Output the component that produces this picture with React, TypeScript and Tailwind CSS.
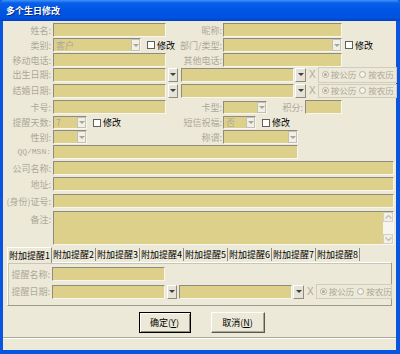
import React from "react";

const sunken =
  "border border-t-[#8f8c7f] border-l-[#8f8c7f] border-b-[#f7f6f0] border-r-[#f7f6f0]";

const Label = ({ className = "", children }: { className?: string; children: React.ReactNode }) => (
  <span className={`shrink-0 text-right whitespace-nowrap text-[#aca899] ${className}`}>{children}</span>
);

const Field = ({ className = "" }: { className?: string }) => (
  <div className={`shrink-0 bg-[#ddd08a] ${sunken} ${className}`} />
);

const Arrow = ({ dark = false }: { dark?: boolean }) => (
  <span
    className={`block w-0 h-0 border-x-[3px] border-t-[3px] border-x-transparent ${
      dark ? "border-t-[#3f3f3f]" : "border-t-[#a9a699]"
    }`}
  />
);

const Select = ({ className = "", text }: { className?: string; text?: string }) => (
  <div className={`shrink-0 flex items-stretch justify-between bg-[#ddd08a] ${sunken} ${className}`}>
    <span className="pl-[2px] flex items-center text-[#aca899]">{text}</span>
    <span className="flex items-center justify-center w-[9px] bg-[#f1efe6] border border-[#c4c1b3]">
      <Arrow />
    </span>
  </div>
);

const DateBtn = ({ className = "" }: { className?: string }) => (
  <div
    className={`shrink-0 h-[14px] flex items-center justify-center bg-[#e6e3d6] border border-t-white border-l-white border-b-[#8f8c7f] border-r-[#8f8c7f] ${className}`}
  >
    <Arrow dark />
  </div>
);

const Check = ({ className = "" }: { className?: string }) => (
  <div className={`shrink-0 flex items-center ${className}`}>
    <span className="w-[8px] h-[8px] bg-white border border-[#5f5f5f]" />
    <span className="ml-[2px] text-black">修改</span>
  </div>
);

const Radio = ({ checked = false }: { checked?: boolean }) => (
  <span className="shrink-0 w-[7px] h-[7px] rounded-full bg-[#f4f3ee] border border-[#b4b1a3] flex items-center justify-center">
    {checked && <span className="w-[3px] h-[3px] rounded-full bg-[#aca899]" />}
  </span>
);

const RadioGroup = ({ className = "" }: { className?: string }) => (
  <div
    className={`shrink-0 flex items-center whitespace-nowrap pl-[3px] text-[8.5px] border border-[#d0cdbd] text-[#aca899] ${className}`}
  >
    <Radio checked />
    <span className="ml-[2px]">按公历</span>
    <span className="ml-[3px] flex">
      <Radio />
    </span>
    <span className="ml-[2px]">按农历</span>
  </div>
);

const X = ({ className = "" }: { className?: string }) => (
  <span className={`shrink-0 text-[#aca899] font-['Liberation_Sans',sans-serif] text-[10px] ${className}`}>X</span>
);

const Chevron = ({ up }: { up?: boolean }) => (
  <svg width="7" height="4" viewBox="0 0 7 4">
    <polyline
      points={up ? "0.5,3.5 3.5,0.5 6.5,3.5" : "0.5,0.5 3.5,3.5 6.5,0.5"}
      fill="none"
      stroke="#c2bfb2"
      strokeWidth="1.2"
    />
  </svg>
);

const tabs = ["附加提醒1", "附加提醒2", "附加提醒3", "附加提醒4", "附加提醒5", "附加提醒6", "附加提醒7", "附加提醒8"];

export default function App() {
  return (
    <div className="w-[400px] h-[354px] flex flex-col bg-[#0a55e0] text-[9px] leading-none font-['Noto_Sans_CJK_SC',sans-serif] overflow-hidden">
      {/* title bar */}
      <div className="h-[21px] shrink-0 flex items-center pl-[6px] rounded-t-[4px] bg-[linear-gradient(to_bottom,#3e93fb_0%,#0a5fe8_14%,#0055e5_50%,#0051df_86%,#0040c2_100%)]">
        <span className="text-white font-bold text-[9px] [text-shadow:1px_1px_0_#0a2a80]">多个生日修改</span>
      </div>

      <div className="flex-1 flex flex-col bg-[#ece9d8] ml-[3px] mr-[4px] mb-[4px]">
        {/* 姓名 */}
        <div className="flex items-center h-[14px] mt-[2px]">
          <div className="w-[169px] flex items-center">
            <Label className="w-[48px]">姓名:</Label>
            <Field className="ml-[2px] w-[113px] h-[14px]" />
          </div>
          <Label className="w-[50px]">昵称:</Label>
          <Field className="ml-[1px] w-[119px] h-[14px]" />
        </div>

        {/* 类别 */}
        <div className="flex items-center h-[14px] mt-[1px]">
          <div className="w-[169px] flex items-center">
            <Label className="w-[48px]">类别:</Label>
            <Select className="ml-[2px] w-[88px] h-[14px]" text="客户" />
            <Check className="ml-[6px]" />
          </div>
          <Label className="w-[50px]">部门/类型:</Label>
          <Select className="ml-[1px] w-[119px] h-[14px]" />
          <Check className="ml-[3px]" />
        </div>

        {/* 移动电话 */}
        <div className="flex items-center h-[14px] mt-[1px]">
          <div className="w-[169px] flex items-center">
            <Label className="w-[48px]">移动电话:</Label>
            <Field className="ml-[2px] w-[113px] h-[14px]" />
          </div>
          <Label className="w-[50px]">其他电话:</Label>
          <Field className="ml-[1px] w-[119px] h-[14px]" />
        </div>

        {/* 出生日期 */}
        <div className="flex items-center h-[15px] mt-[0px]">
          <Label className="w-[48px]">出生日期:</Label>
          <Field className="ml-[2px] w-[113px] h-[14px]" />
          <DateBtn className="ml-[2px] w-[10px]" />
          <Field className="ml-[3px] w-[113px] h-[14px]" />
          <DateBtn className="ml-[1px] w-[11px]" />
          <X className="ml-[3px]" />
          <RadioGroup className="ml-[2px] w-[79px] h-[16px]" />
        </div>

        {/* 结婚日期 */}
        <div className="flex items-center h-[15px] mt-[1px]">
          <Label className="w-[48px]">结婚日期:</Label>
          <Field className="ml-[2px] w-[113px] h-[14px]" />
          <DateBtn className="ml-[2px] w-[10px]" />
          <Field className="ml-[3px] w-[113px] h-[14px]" />
          <DateBtn className="ml-[1px] w-[11px]" />
          <X className="ml-[3px]" />
          <RadioGroup className="ml-[2px] w-[79px] h-[14px]" />
        </div>

        {/* 卡号 */}
        <div className="flex items-center h-[14px] mt-[2px]">
          <div className="w-[169px] flex items-center">
            <Label className="w-[48px]">卡号:</Label>
            <Field className="ml-[2px] w-[113px] h-[14px]" />
          </div>
          <Label className="w-[50px]">卡型:</Label>
          <Select className="ml-[1px] w-[44px] h-[13px]" />
          <Label className="w-[36px]">积分:</Label>
          <Field className="ml-[2px] w-[37px] h-[14px]" />
        </div>

        {/* 提醒天数 */}
        <div className="flex items-center h-[13px] mt-[2px]">
          <div className="w-[169px] flex items-center">
            <Label className="w-[48px]">提醒天数:</Label>
            <Select className="ml-[2px] w-[34px] h-[13px]" text="7" />
            <Check className="ml-[6px]" />
          </div>
          <Label className="w-[50px]">短信祝福:</Label>
          <Select className="ml-[1px] w-[33px] h-[13px]" text="否" />
          <Check className="ml-[6px]" />
        </div>

        {/* 性别 */}
        <div className="flex items-center h-[14px] mt-[1px]">
          <div className="w-[169px] flex items-center">
            <Label className="w-[48px]">性别:</Label>
            <Select className="ml-[2px] w-[34px] h-[14px]" />
          </div>
          <Label className="w-[50px]">称谓:</Label>
          <Select className="ml-[1px] w-[75px] h-[14px]" />
        </div>

        {/* QQ/MSN */}
        <div className="flex items-center h-[14px] mt-[1px]">
          <Label className="w-[48px] font-['Liberation_Mono',monospace] text-[8px]">QQ/MSN:</Label>
          <Field className="ml-[2px] w-[245px] h-[14px]" />
        </div>

        <div className="flex items-center h-[14px] mt-[2px]">
          <Label className="w-[48px]">公司名称:</Label>
          <Field className="ml-[2px] w-[341px] h-[14px]" />
        </div>

        <div className="flex items-center h-[14px] mt-[2px]">
          <Label className="w-[48px]">地址:</Label>
          <Field className="ml-[2px] w-[341px] h-[14px]" />
        </div>

        <div className="flex items-center h-[14px] mt-[3px]">
          <Label className="w-[48px]">(身份)证号:</Label>
          <Field className="ml-[2px] w-[341px] h-[14px]" />
        </div>

        {/* 备注 */}
        <div className="flex items-start h-[34px] mt-[3px]">
          <Label className="w-[48px] mt-[4px]">备注:</Label>
          <div className={`ml-[2px] w-[341px] h-[34px] flex justify-end bg-[#ddd08a] ${sunken}`}>
            <div className="w-[10px] h-full flex flex-col justify-between bg-[#f6f5f0]">
              <div className="h-[10px] flex items-center justify-center bg-[#f1efe6] border border-[#d4d1c3]">
                <Chevron up />
              </div>
              <div className="h-[10px] flex items-center justify-center bg-[#f1efe6] border border-[#d4d1c3]">
                <Chevron />
              </div>
            </div>
          </div>
        </div>

        {/* tabs */}
        <div className="flex items-end h-[15px] mt-[2px] ml-[4px]">
          {tabs.map((t, i) =>
            i === 0 ? (
              <div
                key={t}
                className="w-[45px] h-[16px] flex items-center justify-center bg-[#ece9d8] border-t border-l border-r border-t-white border-l-white border-r-[#8f8c7f] text-black relative z-10 -mb-[1px]"
              >
                {t}
              </div>
            ) : (
              <div
                key={t}
                className="w-[44px] h-[13px] flex items-center justify-center text-black border-r border-r-[#8f8c7f] mb-[1px]"
              >
                {t}
              </div>
            )
          )}
        </div>

        {/* tab panel */}
        <div className="ml-[4px] w-[385px] h-[44px] flex flex-col border border-t-white border-l-white border-b-[#9d9a8d] border-r-[#9d9a8d] shadow-[inset_1px_1px_0_#c9c6b8]">
          <div className="flex items-center h-[14px] mt-[4px]">
            <Label className="w-[42px]">提醒名称:</Label>
            <Field className="ml-[2px] w-[113px] h-[14px]" />
          </div>
          <div className="flex items-center h-[15px] mt-[3px]">
            <Label className="w-[42px]">提醒日期:</Label>
            <Field className="ml-[2px] w-[113px] h-[14px]" />
            <DateBtn className="ml-[2px] w-[10px]" />
            <Field className="ml-[2px] w-[113px] h-[14px]" />
            <DateBtn className="ml-[1px] w-[11px]" />
            <X className="ml-[3px]" />
            <RadioGroup className="ml-[2px] w-[76px] h-[15px]" />
          </div>
        </div>

        {/* buttons */}
        <div className="flex justify-center gap-[20px] mt-[6px] pl-[4px]">
          <button className="w-[52px] h-[21px] flex items-center justify-center bg-[#ece9d8] border border-black shadow-[inset_1px_1px_0_#ffffff,inset_-1px_-1px_0_#8f8c7f] text-black">
            确定(<span className="underline">Y</span>)
          </button>
          <button className="w-[54px] h-[21px] flex items-center justify-center bg-[#ece9d8] border border-t-white border-l-white border-b-[#5a5850] border-r-[#5a5850] shadow-[inset_-1px_-1px_0_#aca899] text-black">
            取消(<span className="underline">N</span>)
          </button>
        </div>

        {/* status strip */}
        <div className="mt-[4px] border-t border-b border-t-[#aca899] border-b-white" />
        <div className="flex-1" />
      </div>
    </div>
  );
}
